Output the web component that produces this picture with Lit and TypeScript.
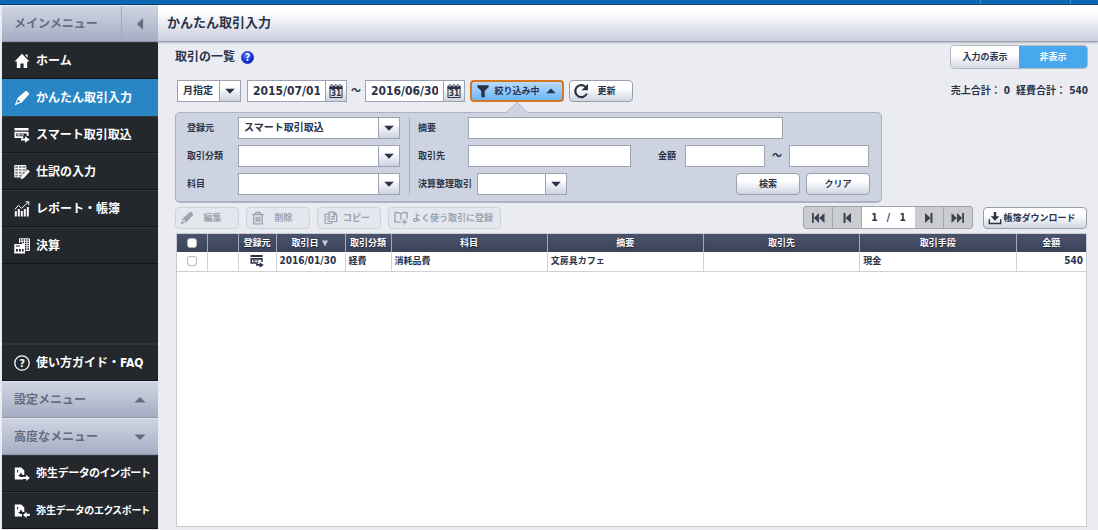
import { LitElement, html, svg, css, nothing, type TemplateResult } from "lit";
import { customElement, state } from "lit/decorators.js";
import { classMap } from "lit/directives/class-map.js";

const icons: Record<string, TemplateResult> = {
  home: svg`<path fill="currentColor" d="M8 .8 15.4 8.6H13.2V15H9.6V10.4H6.4V15H2.8V8.6H.6ZM11.6 1.6h2v3.2l-2-2Z"/>`,
  pencil: svg`<path fill="currentColor" d="M11.800 .8c1.600.3 3 1.700 3.400 3.400L8 12.300.6 15.400 3.600 8ZM4 9.600 2.900 12.900 6.400 11.800Z" fill-rule="evenodd"/>`,
  smart: svg`<path fill="currentColor" fill-rule="evenodd" d="M.5 1h14v2.500H.5ZM.5 4.700h14v4.300h-1.700V6.500H2.200V9.300h7V11H.5ZM3.200 7.200h3.300v1.300H3.200ZM7.500 7.200h2.200v1.300H7.500ZM7 11.500h4V9.300l4.700 3.200-4.700 3.200v-2.200H7Z"/>`,
  journal: svg`<path fill="none" stroke="currentColor" stroke-width="1" d="M.8 1.500h11v6M.8 1.500v11.500h7M1 4.500h10.500M1 7.300h10M1 10.200h8M4.500 1.500V13M8 1.500v9"/><path fill="currentColor" fill-opacity=".45" d="M1 1.500h10.500v6L8 12 7 13H1Z"/><path fill="currentColor" d="m13.700 5.600 2.200 2-6 6.500-3.200 1.500 1-3.500Z"/>`,
  report: svg`<path fill="currentColor" d="M.8 10h2v5.500h-2ZM3.800 8h2v7.500h-2ZM6.800 10h2v5.500h-2ZM9.800 8h2v7.500h-2ZM12.800 6h2v9.500h-2Z"/><path fill="none" stroke="currentColor" d="M.8 8.500 4.500 4.300 7.500 7.300 14.500 1M11.500 .8h3.300v3.200"/>`,
  closing: svg`<path fill="none" stroke="currentColor" d="M5.500 5V.8h10V12.500h-4"/><path fill="none" stroke="currentColor" stroke-width=".9" d="M5.500 3.200h10M8 5.400h7.500M11.500 7.600h4M11.500 9.800h4M8 1v4M10.500 1v4.500M13 1v11"/><path fill="currentColor" fill-rule="evenodd" d="M.3 6h10.700v9.500H.3ZM2 7.500v1h4v-1ZM2 11v2.500h1.800V11ZM5 11v2.500h1.800V11ZM8 11v2.500h1.600V11Z"/>`,
  guide: svg`<circle cx="8" cy="8" r="7.200" fill="none" stroke="currentColor" stroke-width="1.300"/><text x="8" y="12" text-anchor="middle" font-size="11" fill="currentColor">?</text>`,
  importer: svg`<path fill="currentColor" fill-rule="evenodd" d="M.8 1.500h6.500l3 3V9H8.500L7 6.500 5.500 9 4 9.500 6.500 11H9v2.500H.8ZM3 7.500 4.500 4H3ZM9 10.800h3.200V8.800L15.800 11.900l-3.600 3v-2H9Z"/>`,
  exporter: svg`<path fill="currentColor" fill-rule="evenodd" d="M.8 1.500h6.500l3 3V9H8.500L7 6.500 5.500 9 4 9.500 6.500 11H8v2.500H.8ZM3 7.500 4.500 4H3ZM15.800 10.800h-3.200V8.800L9 11.900l3.600 3v-2h3.200Z"/>`,
  calendar: svg`<path fill="none" stroke="currentColor" d="M2 4v10.500h12V4"/><path fill="currentColor" d="M1.500 2.500H3v1h1.500v-1H7v1h1.500v-1H11v1h1.500v-1h2V6h-13ZM3.200 1h1.200v1.500H3.200ZM7.200 1h1.200v1.500H7.200ZM11.200 1h1.200v1.500h-1.200Z"/><text x="8" y="13.300" text-anchor="middle" font-size="8.500" fill="currentColor">31</text>`,
  funnel: svg`<path fill="currentColor" d="M1.500 1.500h13v2L10 8v7H6V8L1.500 3.500Z"/>`,
  reload: svg`<path fill="none" stroke="currentColor" stroke-width="2.200" d="M13.800 10.600A6 6 0 1 1 12.300 3.700"/><path fill="currentColor" d="M15 .8v6.400H8.500Z"/>`,
  trash: svg`<path fill="none" stroke="currentColor" stroke-width="1.500" d="M1.500 4h13M5.600 3.500V1.500h4.800v2M3.200 4.500v10.300h9.600V4.500M6 6.500v6M8 6.500v6M10 6.500v6"/>`,
  copy: svg`<path fill="none" stroke="currentColor" stroke-width="1.400" d="M6 3.500H1.200V14H9v-2M6 1.200h5.500L14.500 4v8H6ZM11 1.500V4.500h3M8 6.500h4.500M8 9h4.500M3 7h2M3 10h2"/>`,
  book: svg`<path fill="none" stroke="currentColor" stroke-width="1.500" d="M8 3.200C6.500 1.500 4 1.500 1 1.800v11h6.500M8 3.200C9.500 1.500 12 1.500 15 1.800v7M8 3.200V10M12 9.500v6M9 12.500h6"/>`,
  first: svg`<path fill="currentColor" d="M2 3h1.800v10H2ZM9 3v10L3.800 8ZM14.500 3v10L9.200 8Z"/>`,
  prev: svg`<path fill="currentColor" d="M4.500 3h2v10h-2ZM12 3v10L6.500 8Z"/>`,
  next: svg`<path fill="currentColor" d="M11.500 3h-2v10h2ZM4 3v10l5.500-5Z"/>`,
  last: svg`<path fill="currentColor" d="M14 3h-1.800v10H14ZM7 3v10l5.200-5ZM1.500 3v10l5.300-5Z"/>`,
  download: svg`<path fill="currentColor" d="M6.600 1h2.800v5H13L8 11 3 6h3.600Z"/><path fill="none" stroke="currentColor" stroke-width="1.600" d="M1.500 9.500v4.700h13V9.500"/>`,
  down: svg`<path fill="currentColor" d="M2.500 5.500h11L8 11Z"/>`,
  up: svg`<path fill="currentColor" d="M2.500 10.500h11L8 5Z"/>`,
  left: svg`<path fill="currentColor" d="M11.500 1.500v13L4.500 8Z"/>`,
};

const icon = (name: string, size = "m") =>
  html`<svg class="icon ${size}" viewBox="0 0 16 16" aria-hidden="true">${icons[name]}</svg>`;

const mainMenu = [
  ["home", "ホーム"],
  ["pencil", "かんたん取引入力"],
  ["smart", "スマート取引取込"],
  ["journal", "仕訳の入力"],
  ["report", "レポート・帳簿"],
  ["closing", "決算"],
];

const entries = [
  { date: "2016/01/30", kind: "経費", account: "消耗品費", memo: "文房具カフェ", partner: "", method: "現金", amount: "540" },
];

@customElement("app-root")
export class AppRoot extends LitElement {
  @state() private current = "pencil";
  @state() private filterOpen = true;

  static styles = css`
    :host {
      display: grid;
      grid-template: auto 1fr / 156px minmax(0, 1fr);
      min-height: 100vh;
      padding-left: 2px;
      box-sizing: border-box;
      background: #ebecf2;
      color: #2b3349;
      font: bold 9px/14px "DejaVu Sans Condensed", "Noto Sans CJK JP", sans-serif;
    }
    * { box-sizing: border-box; }
    button, input, select { font: inherit; color: inherit; margin: 0; }
    button { cursor: pointer; padding: 0; }
    .icon { display: block; flex: none; width: 14px; height: 14px; }
    .icon.l { width: 16px; height: 16px; }

    .top {
      grid-column: 1 / -1;
      height: 5px;
      margin-left: -2px;
      padding-right: 27px;
      display: flex;
      justify-content: flex-end;
      gap: 89px;
      background: #0c68b4;
      border-bottom: 1px solid #123f66;
    }
    .top span { width: 1px; background: #3c8ccc; }

    .side { display: flex; flex-direction: column; background: #24282d; margin-bottom: 1px; }
    .side ul { list-style: none; margin: 0; padding: 0; }
    .spacer { flex: 1; border-bottom: 1px solid #30353a; }
    .bar {
      display: flex;
      align-items: center;
      justify-content: space-between;
      width: 100%;
      height: 37px;
      padding: 0 10px 0 12px;
      border: 0;
      border-top: 1px solid #dfe3ec;
      border-bottom: 1px solid #8f96aa;
      background: linear-gradient(#cfd5e2, #a5adc4);
      color: #646c80;
      font-size: 12px;
    }
    .bar.main { padding-right: 0; }
    .bar .fold {
      display: grid;
      place-items: center;
      width: 37px;
      height: 35px;
      border: 0;
      border-left: 1px solid #a3aabd;
      background: none;
    }
    .item {
      display: flex;
      align-items: center;
      gap: 6px;
      height: 37px;
      padding-left: 12px;
      border-top: 1px solid #33373c;
      border-bottom: 1px solid #121518;
      color: #fff;
      font-size: 12px;
      text-decoration: none;
      white-space: nowrap;
    }
    .item.on { background: #2986c4; border-color: #2986c4; }
    .item.small { font-size: 11px; font-feature-settings: "palt"; }
    .item.tiny { font-size: 10px; font-feature-settings: "palt"; }

    .main-area { display: flex; flex-direction: column; min-width: 0; }
    h1 {
      display: flex;
      align-items: center;
      height: 37px;
      margin: 0;
      padding-left: 9px;
      border-bottom: 1px solid #9fa1ac;
      background: linear-gradient(#fff 20%, #c9cede);
      box-shadow: 0 1px 2px #b5b6bf;
      font-size: 13px;
    }
    .content { flex: 1; display: flex; flex-direction: column; padding: 3px 11px 3px 17px; }
    .row { display: flex; align-items: center; }
    .push { margin-left: auto; }

    h2 { margin: 0; font-size: 12px; line-height: 24px; }
    .help {
      width: 13px;
      height: 13px;
      margin-left: 6px;
      border: 1px solid #1a2fb8;
      border-radius: 50%;
      background: radial-gradient(circle at 40% 30%, #4e86ff, #0a22d0 70%);
      color: #fff;
      font-size: 10px;
      line-height: 11px;
    }
    .toggle { display: flex; width: 138px; height: 24px; margin-right: -1px; border: 1px solid #b4b7c2; border-radius: 4px; overflow: hidden; }
    .toggle button { flex: 1; border: 0; background: linear-gradient(#fff 40%, #d3d7e3); }
    .toggle button.on { background: #48a8ee; color: #fff; }

    .tools { height: 22px; margin: 11px 0 10px; padding-left: 2px; gap: 6px; }
    .box { height: 22px; border: 1px solid #9da2b0; background: #fff; padding: 0 6px; min-width: 0; border-radius: 0; }
    .pick { display: grid; grid-template-columns: minmax(0, 1fr) 22px; }
    .pick select { grid-area: 1 / 1 / 2 / 3; appearance: none; width: 100%; font-size: 10px; padding: 0 5px; }
    .pick .arrow {
      grid-area: 1 / 2;
      display: grid;
      place-items: center;
      pointer-events: none;
      border: 1px solid #9da2b0;
      background: linear-gradient(#fff 30%, #ccd2e0);
    }
    .month { width: 64px; }
    .date { display: flex; width: 100px; }
    .date input { flex: 1; padding: 0 5px; font-size: 12px; }
    .date button {
      display: grid;
      place-items: center;
      width: 22px;
      border: 1px solid #9da2b0;
      margin-left: -1px;
      background: linear-gradient(#fff 30%, #ccd2e0);
    }
    .tilde { width: 8px; margin: 0 -1px; display: flex; justify-content: center; font-size: 10px; }
    .btn {
      display: flex;
      align-items: center;
      justify-content: center;
      height: 22px;
      min-width: 64px;
      border: 1px solid #9a9fae;
      border-radius: 4px;
      background: linear-gradient(#fff 35%, #d0d5e2);
      white-space: nowrap;
    }
    .filter { position: relative; margin: 0 -1px; }
    .filter .btn {
      width: 94px;
      gap: 4px;
      border: 2px solid #d77820;
      background: linear-gradient(#b9dafb, #6bb7fb);
    }
    .tip { position: absolute; left: 36px; top: 100%; width: 22px; height: 11px; display: block; }
    .reload { gap: 8px; padding-right: 13px; }
    .totals { display: flex; gap: 6px; margin: 0 -1px 0 auto; font-size: 10px; white-space: nowrap; }

    .panel {
      display: flex;
      max-width: 707px;
      padding: 4px 11px 6px;
      border: 1px solid #adb2c1;
      border-bottom-width: 2px;
      border-radius: 5px;
      background: #cdd3e0;
    }
    .fields { display: grid; row-gap: 6px; align-content: center; }
    .left { grid-template-columns: 51px 162px; align-items: center; padding-right: 9px; }
    .right { flex: 1; padding-left: 8px; border-left: 1px solid #a9aebd; }
    .right label { flex: none; white-space: nowrap; }
    .right .row > label:first-child { width: 50px; }
    .right .row > label.long { width: 59px; }
    .memo { width: 315px; }
    .partner { width: 163px; }
    .money { width: 80px; }
    .gap-money { margin: 0 9px 0 27px; }
    .wave { width: 24px; text-align: center; font-size: 10px; }
    .settle { width: 90px; }
    .actions { display: flex; gap: 6px; margin-left: auto; }

    .ops { margin-top: 3px; gap: 7px; }
    .ops .btn:disabled { border-color: #cfd2dc; background: #e4e7ee; color: #9da2af; cursor: default; gap: 9px; padding-right: 12px; }
    .ops .btn.snug:disabled { gap: 4px; padding: 0 7px 0 5px; }
    .ops .btn.copy:disabled { gap: 5px; padding: 0 8px 0 4px; }
    .pager { display: flex; width: 170px; height: 23px; border: 1px solid #9fa2ab; border-radius: 3px; overflow: hidden; background: #cbccd0; }
    .pager button { display: grid; place-items: center; flex: 1; border: 0; border-right: 1px solid #a5a7ae; background: none; color: #3c4350; }
    .pager button:last-child { border-right: 0; }
    .pager output { width: 53px; background: #fff; font-size: 10px; line-height: 21px; display: flex; justify-content: space-evenly; }
    .ops .download { width: 104px; gap: 1px; margin-left: 3px; padding-right: 6px; }

    .sheet { flex: 1; margin: 4px 0 0 1px; border: 1px solid #c9cbd3; background: #fff; }
    table { width: 100%; border-collapse: collapse; table-layout: fixed; }
    th { height: 18px; padding: 0; border-right: 1px solid #a4a9b6; background: linear-gradient(#4b536b, #3b435b); color: #fff; text-shadow: 0 1px 1px #1a1f2e; white-space: nowrap; }
    td { height: 19px; padding: 0 3px; border-right: 1px solid #d0d1d5; border-bottom: 1px solid #d0d1d5; white-space: nowrap; }
    th:last-child, td:last-child { border-right: 0; }
    th svg { display: inline-block; width: 8px; height: 8px; vertical-align: -1px; color: #c5cad6; }
    td.mid { padding: 0; }
    td.mid svg { margin: auto; }
    td.num, td.day { font-size: 10px; }
    td.num { text-align: right; }
    .c1 { width: 30px; } .c2 { width: 31px; } .c3 { width: 38px; } .c4 { width: 69px; } .c5 { width: 46px; } .c6 { width: 70px; }
    input[type="checkbox"] {
      appearance: none;
      display: block;
      width: 10px;
      height: 10px;
      margin: 0 auto;
      border: 1px solid #b5b7bd;
      border-radius: 3px;
      background: #fff;
    }
    input[type="checkbox"]:checked { background: #2986c4; }
  `;

  private item(name: string, label: string, size = "") {
    return html`<li>
      <a href="#${name}" class=${classMap({ item: true, on: this.current === name, small: size === "small", tiny: size === "tiny" })}
        @click=${() => (this.current = name)}>${icon(name, "l")}${label}</a>
    </li>`;
  }

  private pick(id: string, cls: string, value = "") {
    return html`<span class="pick ${cls}">
      <select id=${id} class="box" aria-label=${id === "month" ? "期間" : nothing}><option>${value}</option></select>
      <span class="arrow">${icon("down")}</span>
    </span>`;
  }

  private date(label: string, value: string) {
    return html`<span class="date">
      <input class="box" type="text" aria-label=${label} .value=${value} />
      <button aria-label="カレンダー">${icon("calendar", "l")}</button>
    </span>`;
  }

  render() {
    return html`
      <div class="top"><span></span><span></span></div>
      <nav class="side">
        <div class="bar main">メインメニュー<button class="fold" aria-label="たたむ">${icon("left")}</button></div>
        <ul>${mainMenu.map(([name, label]) => this.item(name, label))}</ul>
        <div class="spacer"></div>
        <ul>${this.item("guide", "使い方ガイド・FAQ")}</ul>
        <button class="bar">設定メニュー${icon("up", "l")}</button>
        <button class="bar">高度なメニュー${icon("down", "l")}</button>
        <ul>
          ${this.item("importer", "弥生データのインポート", "small")}
          ${this.item("exporter", "弥生データのエクスポート", "tiny")}
        </ul>
      </nav>
      <main class="main-area">
        <h1>かんたん取引入力</h1>
        <div class="content">
          <div class="row">
            <h2>取引の一覧</h2>
            <button class="help" aria-label="ヘルプ">?</button>
            <div class="toggle push"><button>入力の表示</button><button class="on">非表示</button></div>
          </div>
          <div class="row tools">
            ${this.pick("month", "month", "月指定")}
            ${this.date("開始日", "2015/07/01")}
            <span class="tilde">～</span>
            ${this.date("終了日", "2016/06/30")}
            <span class="filter">
              <button class="btn" @click=${() => (this.filterOpen = !this.filterOpen)}>
                ${icon("funnel")}絞り込み中${icon(this.filterOpen ? "up" : "down")}
              </button>
              ${this.filterOpen
                ? html`<svg class="tip" viewBox="0 0 22 11"><path d="M0 11 11 0 22 11Z" fill="#cdd3e0"/><path d="M0 10.500 11 .5 22 10.500" fill="none" stroke="#b4b9c7"/></svg>`
                : nothing}
            </span>
            <button class="btn reload">${icon("reload", "l")}更新</button>
            <div class="totals"><span>売上合計： 0</span><span>経費合計： 540</span></div>
          </div>
          ${this.filterOpen ? this.panel() : nothing}
          <div class="row ops">
            <button class="btn" disabled>${icon("pencil")}編集</button>
            <button class="btn" disabled>${icon("trash")}削除</button>
            <button class="btn copy" disabled>${icon("copy")}コピー</button>
            <button class="btn snug" disabled>${icon("book")}よく使う取引に登録</button>
            <div class="pager push">
              <button aria-label="最初">${icon("first", "l")}</button>
              <button aria-label="前">${icon("prev", "l")}</button>
              <output><span>1</span><span>/</span><span>1</span></output>
              <button aria-label="次">${icon("next", "l")}</button>
              <button aria-label="最後">${icon("last", "l")}</button>
            </div>
            <button class="btn download">${icon("download")}帳簿ダウンロード</button>
          </div>
          ${this.table()}
        </div>
      </main>
    `;
  }

  private panel() {
    return html`<form class="panel" @submit=${(e: Event) => e.preventDefault()}>
      <div class="fields left">
        <label for="source">登録元</label>${this.pick("source", "", "スマート取引取込")}
        <label for="kind">取引分類</label>${this.pick("kind", "")}
        <label for="account">科目</label>${this.pick("account", "")}
      </div>
      <div class="fields right">
        <div class="row"><label for="memo">摘要</label><input id="memo" class="box memo" type="text" /></div>
        <div class="row">
          <label for="partner">取引先</label><input id="partner" class="box partner" type="text" />
          <label for="low" class="gap-money">金額</label><input id="low" class="box money" type="text" />
          <span class="wave">～</span><input class="box money" type="text" aria-label="金額の上限" />
        </div>
        <div class="row">
          <label for="settle" class="long">決算整理取引</label>${this.pick("settle", "settle")}
          <div class="actions"><button class="btn">検索</button><button class="btn" type="reset">クリア</button></div>
        </div>
      </div>
    </form>`;
  }

  private table() {
    return html`<div class="sheet">
      <table>
        <thead>
          <tr>
            <th class="c1"><input type="checkbox" aria-label="すべて選択" /></th>
            <th class="c2"></th>
            <th class="c3">登録元</th>
            <th class="c4">取引日 <svg viewBox="0 0 8 8"><path fill="currentColor" d="M1 1.500h6L4 7.500Z"/></svg></th>
            <th class="c5">取引分類</th>
            <th>科目</th><th>摘要</th><th>取引先</th><th>取引手段</th>
            <th class="c6">金額</th>
          </tr>
        </thead>
        <tbody>
          ${entries.map((e) => html`<tr>
            <td><input type="checkbox" aria-label="選択" /></td>
            <td></td>
            <td class="mid">${icon("smart")}</td>
            <td class="day">${e.date}</td>
            <td>${e.kind}</td>
            <td>${e.account}</td>
            <td>${e.memo}</td>
            <td>${e.partner}</td>
            <td>${e.method}</td>
            <td class="num">${e.amount}</td>
          </tr>`)}
        </tbody>
      </table>
    </div>`;
  }
}
